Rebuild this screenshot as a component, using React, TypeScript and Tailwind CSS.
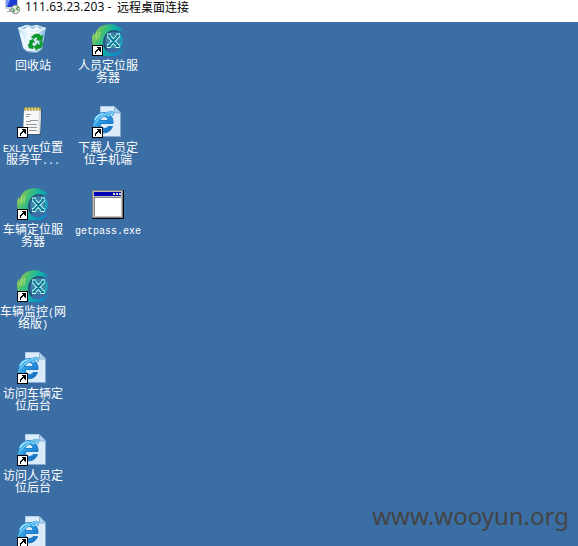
import type { ReactNode } from "react";

function ShortcutArrow() {
  return (
    <g shapeRendering="crispEdges">
      <rect x="0" y="21" width="11" height="11" fill="#000" />
      <rect x="1" y="22" width="9" height="9" fill="#fff" />
      <path d="M4 23h5v5h-1v-1h-1v-1h-1v1h-1v1h-1v2h-1v-3h1v-1h1v-1h1v-1h-1v-1h-1z" fill="#000" />
    </g>
  );
}

function Icon({ children }: { children: ReactNode }) {
  return (
    <svg width="32" height="32" viewBox="0 0 32 32" className="block shrink-0">
      {children}
    </svg>
  );
}

function RecycleIcon() {
  return (
    <Icon>
      <defs>
        <linearGradient id="bin" x1="0" x2="1">
          <stop offset="0" stopColor="#b4def4" />
          <stop offset=".35" stopColor="#eef9ff" />
          <stop offset=".7" stopColor="#cfe7f5" />
          <stop offset="1" stopColor="#7db3d8" />
        </linearGradient>
      </defs>
      <path d="M1 4 9 1l6 1 5-1 9 3-4 21-5 4-10-1-4-4z" fill="url(#bin)" />
      <path d="M1 4 9 1l6 1 5-1 9 3-9 4-10-1z" fill="#d9eff9" />
      <path d="m4 5 6-3 6 1 5-1 5 2-7 2-7-1z" fill="#8dbcd8" />
      <path d="m7 6 4-4 5 3 4-3 3 3-6 2z" fill="#f4faff" />
      <path d="m1 4 9 4 10 1 9-5" fill="none" stroke="#fff" />
      <path d="m6 24 4 3 10 1 5-3-5 4-10-1z" fill="#5c95bd" />
      <path d="m4 9 4 14" stroke="#fff" strokeOpacity=".8" strokeWidth="2" />
      <g fill="#0a9a2a" stroke="#087c20" strokeWidth=".3">
        <path d="m14 13 4-3 4 0 2 2 2-1-1 6-6-1 2-1-2-2-2 2z" />
        <path d="m12 17 4-2 2 4-2-1-1 3 2 1-1 3-4-1-1-3 2-3z" />
        <path d="m22 18 3-1 1 3-2 4-4 1v2l-3-4 4-4v2l3-1z" />
      </g>
    </Icon>
  );
}

function SwirlIcon({ id }: { id: string }) {
  return (
    <Icon>
      <defs>
        <linearGradient id={id} x1="1" y1="8" x2="28" y2="22" gradientUnits="userSpaceOnUse">
          <stop offset="0" stopColor="#9ccc52" />
          <stop offset=".25" stopColor="#4cc070" />
          <stop offset=".55" stopColor="#12b4a4" />
          <stop offset="1" stopColor="#0791c6" />
        </linearGradient>
      </defs>
      <path
        d="M5 6C9 1 16-1 25 1l-4 1c6 0 9 2 10 5l-4-2 2 3c-6-3-12-2-15 2-4 5-4 13 0 17 5 4 12 3 17-3-2 6-7 9-13 9C8 33 0 25 0 15c0-2 1-5 2-7v4z"
        fill={`url(#${id})`}
      />
      <path d="m2 14 3-6-1 8 4-8-1 8" fill="none" stroke="#bce16a" strokeOpacity=".6" />
      <path d="M27 8c-5-2-10-1-13 3-3 5-3 11 1 15" fill="none" stroke="#174f66" strokeWidth="1.2" />
      <circle cx="21.5" cy="16.5" r="7.5" fill="#3989a6" />
      <path d="M26 9c5 4 5 11 0 15" fill="none" stroke="#15abc0" strokeWidth="1.8" />
      <path d="m17 12 8.500 10M26.500 11.500l-9.500 10.500M15 11.500h4M24 11.500h4M15 22h4M23.500 22h4" stroke="#d3ffff" strokeWidth="4" />
      <path d="m17 12 8.500 10M26.500 11.500l-9.500 10.500M15.500 11.500h3M24.500 11.500h3M15.500 22h3M24 22h3" stroke="#087895" strokeWidth="2" />
      <ShortcutArrow />
    </Icon>
  );
}

function NotepadIcon() {
  return (
    <Icon>
      <path d="M7 4h18l-1 25H6z" fill="#385879" />
      <path d="M7 3h17l-1 25H6z" fill="#f8f8f6" />
      <path d="m22 4 2-1-1 25h-2z" fill="#d8dde0" />
      <path d="M7 2h17v2H7z" fill="#d9ca83" />
      <path d="M8 1v4m3-4v4m3-4v4m3-4v4m3-4v4m3-4v4" stroke="#7f722f" />
      <path d="M9 1v3m3-3v3m3-3v3m3-3v3m3-3v3" stroke="#f0d65d" />
      <g stroke="#9197a0" shapeRendering="crispEdges">
        <path d="M9 8.500h5M9 10.500h3M13 14.500h8M9 15.500h5M9 18.500h11M10 21.500h10M12 24.500h8" />
      </g>
      <ShortcutArrow />
    </Icon>
  );
}

function BrowserIcon({ id }: { id: string }) {
  return (
    <Icon>
      <defs>
        <linearGradient id={id} x1="0" y1="0" x2="1" y2="1">
          <stop offset="0" stopColor="#5fc4f6" />
          <stop offset=".5" stopColor="#2494e2" />
          <stop offset="1" stopColor="#1063b4" />
        </linearGradient>
      </defs>
      <path d="M8.500 .5h14l6 6v24h-20z" fill="#dcebfa" stroke="#b0cce8" />
      <path d="M28.500 7v23.500h-20" fill="none" stroke="#83aad0" />
      <path d="M22.500 .5V7h6z" fill="#afd4f5" stroke="#769ec5" strokeWidth=".7" />
      <path
        d="M20.500 20.500c-2 6-8 7.500-13 5.500-8-3-8-14-1-18 7-4 15.500 1 14.500 9.500H8c.5 5.500 6 6.500 8 3zM8 14.500h8c0-5-7-6-8 0z"
        fill={`url(#${id})`}
        fillRule="evenodd"
        stroke="#1677c4"
        strokeWidth=".9"
      />
      <path d="M3 14C5 8 13 6 17.500 10" fill="none" stroke="#a9e6ff" strokeWidth="1.500" />
      <path d="M1.500 23c-3-3 4-12 11-15.500 7-3.500 11-3.500 8.500 2.500 0-4-5-2-9 .5C6 14 2 19 1.500 23z" fill="#6fcbf5" stroke="#218ccf" strokeWidth=".5" />
      <ShortcutArrow />
    </Icon>
  );
}

function ProgramIcon() {
  return (
    <Icon>
      <g shapeRendering="crispEdges">
        <path d="M0 2h32v29H0z" fill="#000" />
        <path d="M0 2h31v28H0z" fill="#808080" />
        <path d="M1 3h29v26H1z" fill="#c0c0c0" />
        <path d="M2 4h27v4H2z" fill="#0000b5" />
        <path d="M21 5h2v2h-2zm3 0h2v2h-2zm3 0h2v2h-2z" fill="#d8d8d0" />
        <path d="M2 9h27v19H2z" fill="#808080" />
        <path d="M3 10h26v18H3z" fill="#fff" />
      </g>
    </Icon>
  );
}

function Half({ children }: { children: ReactNode }) {
  return <span className="font-['Liberation_Mono',monospace] text-[10px] leading-none">{children}</span>;
}

function DesktopItem({ icon, lines }: { icon: ReactNode; lines: ReactNode[] }) {
  return (
    <div className="flex h-[82px] flex-col items-center">
      {icon}
      <div className="mt-[3px] flex flex-col items-center text-[12px] leading-[12px] whitespace-nowrap text-white">
        {lines.map((line, i) => (
          <div key={i} className="h-3">{line}</div>
        ))}
      </div>
    </div>
  );
}

function ConnectionIcon() {
  return (
    <svg width="16" height="15" viewBox="0 0 16 15" className="block shrink-0">
      <path d="M0 0h13v9H0z" fill="#d2d5db" />
      <path d="M1 0h11v7H1z" fill="#183bd1" />
      <path d="M1 0h4L2 7H1z" fill="#7198ff" />
      <path d="M4 9h4v2H4zm-2 2h7v1H2z" fill="#a5aab0" />
      <circle cx="10.500" cy="9.500" r="4.300" fill="#e5eae5" stroke="#8b928c" />
      <path d="m7.500 8.500 2 2-2 2M13.500 6.500l-2 2 2 2" fill="none" stroke="#328c39" strokeWidth="1.200" />
    </svg>
  );
}

export default function App() {
  return (
    <div className="flex h-[546px] w-[578px] flex-col overflow-hidden bg-[#3a6ea5] font-['Noto_Sans_CJK_SC',sans-serif]">
      <header className="flex h-[22px] shrink-0 items-start bg-white pl-[5px] text-[12px] leading-[14px] text-black">
        <ConnectionIcon />
        <span className="ml-1 w-[92px] whitespace-pre font-['Open_Sans',sans-serif] text-[12px] tracking-[0.1px]">111.63.23.203 - </span>
        <span>远程桌面连接</span>
      </header>
      <main className="relative flex min-h-0 flex-1 items-start overflow-hidden pt-[2px]">
        <div className="w-[66px] shrink-0">
          <DesktopItem icon={<RecycleIcon />} lines={["回收站"]} />
          <DesktopItem icon={<NotepadIcon />} lines={[<><Half>EXLIVE</Half>位置</>, <>服务平<Half>...</Half></>]} />
          <DesktopItem icon={<SwirlIcon id="swirl-vehicle" />} lines={["车辆定位服", "务器"]} />
          <DesktopItem icon={<SwirlIcon id="swirl-monitor" />} lines={[<>车辆监控<Half>(</Half>网</>, <>络版<Half>)</Half></>]} />
          <DesktopItem icon={<BrowserIcon id="ie-vehicle" />} lines={["访问车辆定", "位后台"]} />
          <DesktopItem icon={<BrowserIcon id="ie-person" />} lines={["访问人员定", "位后台"]} />
          <DesktopItem icon={<BrowserIcon id="ie-last" />} lines={[]} />
        </div>
        <div className="w-[84px] shrink-0">
          <DesktopItem icon={<SwirlIcon id="swirl-person" />} lines={["人员定位服", "务器"]} />
          <DesktopItem icon={<BrowserIcon id="ie-download" />} lines={["下载人员定", "位手机端"]} />
          <DesktopItem icon={<ProgramIcon />} lines={[<Half>getpass.exe</Half>]} />
        </div>
        <div className="absolute right-[9px] bottom-[13px] font-['Noto_Sans',sans-serif] text-[24px] leading-[34px] text-[#444444]">
          www.wooyun.org
        </div>
      </main>
    </div>
  );
}
